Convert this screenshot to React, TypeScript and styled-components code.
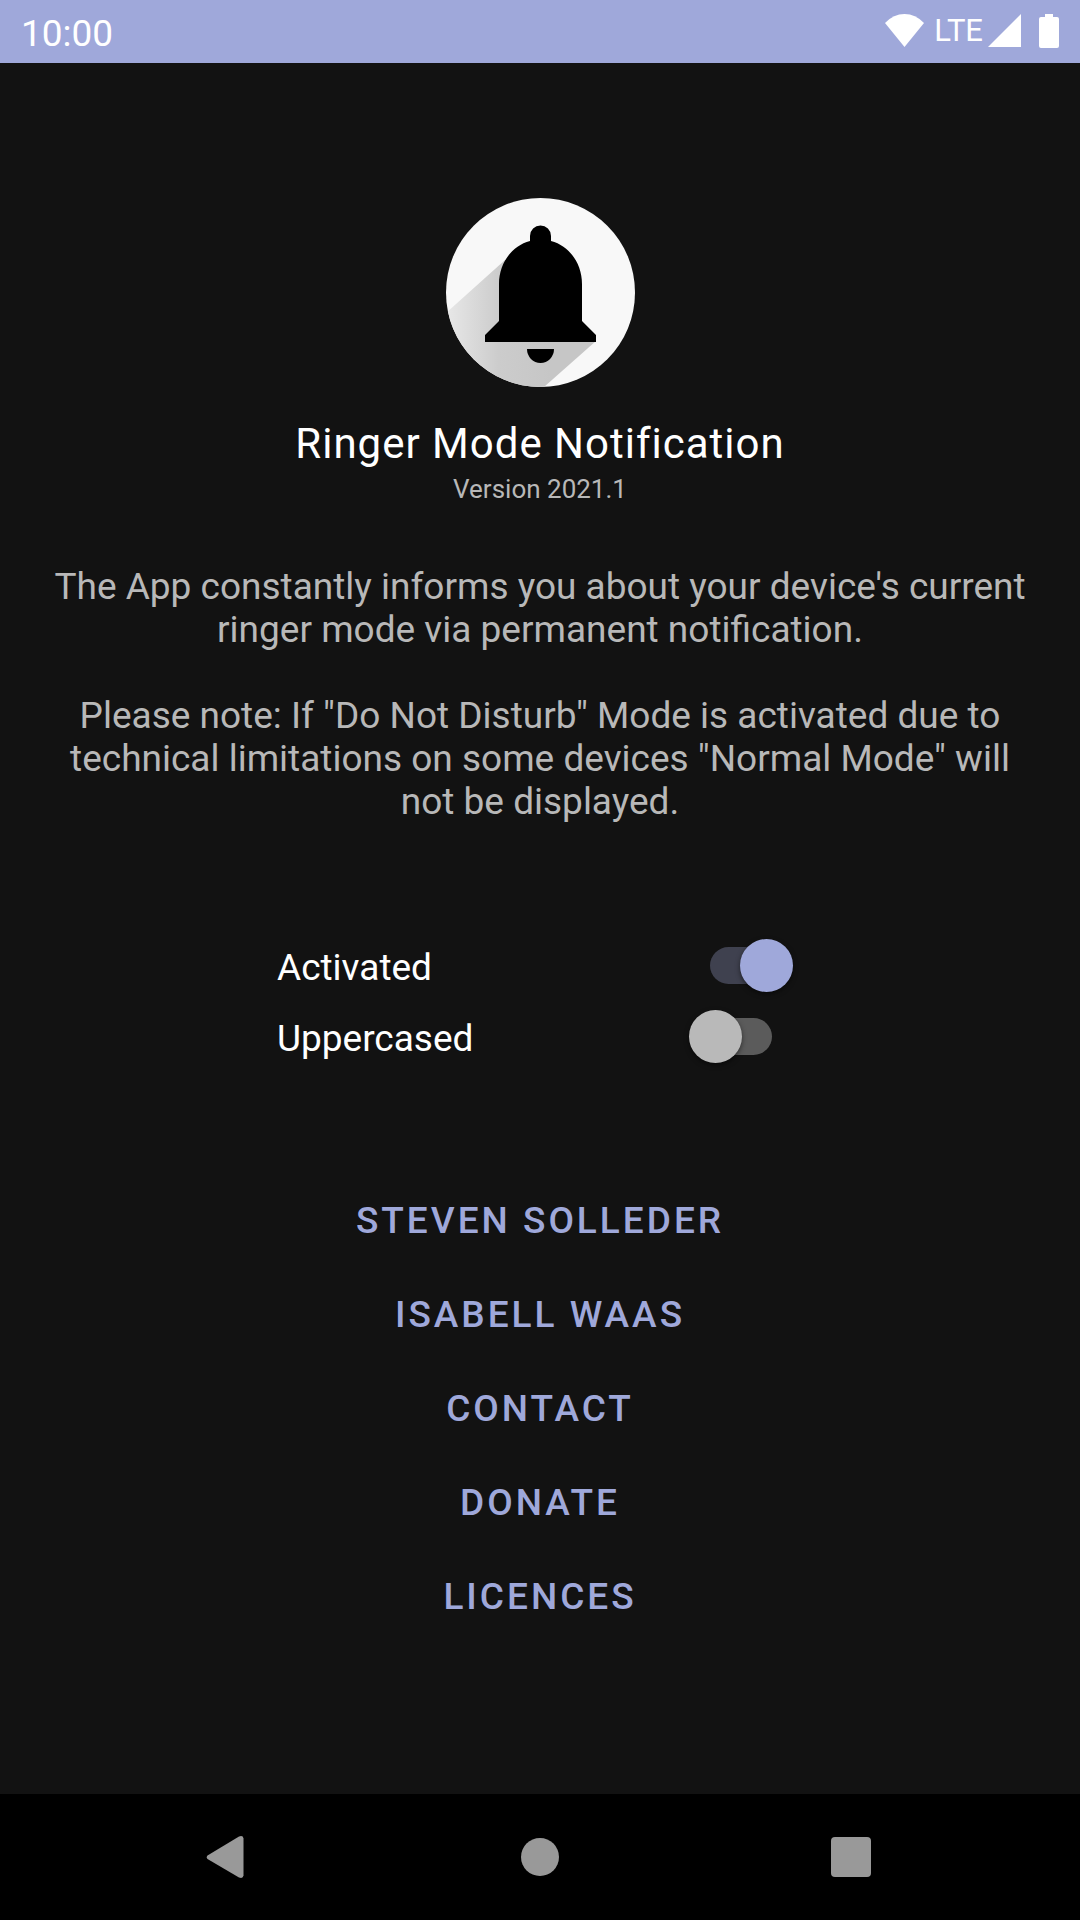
import React, { useState } from "react";
import styled, { createGlobalStyle } from "styled-components";

const GlobalStyle = createGlobalStyle`
  *, *::before, *::after { box-sizing: border-box; }
  body {
    margin: 0;
    background: #121212;
    color: #ffffff;
    font-family: Roboto, "Noto Sans", sans-serif;
  }
`;

const Screen = styled.div`
  display: flex;
  flex-direction: column;
  min-height: 100vh;
`;

const StatusBar = styled.header`
  display: flex;
  align-items: flex-start;
  justify-content: space-between;
  height: 63px;
  padding: 0 21px;
  background: #9fa8da;
`;

const Clock = styled.time`
  padding-top: 12px;
  font-size: 37px;
  line-height: 44px;
`;

const StatusIcons = styled.div`
  display: flex;
  align-items: center;
  height: 61px;
`;

const Network = styled.span`
  margin: 0 5px 0 10px;
  font-size: 31px;
  line-height: 40px;
`;

const BatteryIcon = styled.svg`
  margin-left: 18px;
`;

const Main = styled.main`
  flex: 1;
  display: flex;
  flex-direction: column;
  align-items: center;
  padding: 135px 42px 48px;
  text-align: center;
`;

const Title = styled.h1`
  margin: 32px 0 0;
  font-size: 42px;
  line-height: 50px;
  font-weight: 400;
  letter-spacing: 1px;
`;

const Version = styled.p`
  margin: 4px 0 0;
  color: #b8b8b8;
  font-size: 26px;
  line-height: 32px;
`;

const Description = styled.p`
  margin: 60px 0 0;
  color: #b8b8b8;
  font-size: 37px;
  line-height: 43px;

  & + & {
    margin-top: 43px;
  }
`;

const Settings = styled.div`
  width: 526px;
  max-width: 100%;
  margin-top: 109px;
`;

const SettingRow = styled.label`
  display: flex;
  align-items: center;
  justify-content: space-between;
  height: 71px;
  padding-right: 10px;
  font-size: 37px;
  line-height: 44px;
`;

const Switch = styled.input`
  appearance: none;
  display: grid;
  align-items: center;
  width: 104px;
  height: 53px;
  margin: 0 0 4px;

  &::before,
  &::after {
    content: "";
    grid-area: 1 / 1;
  }

  &::before {
    justify-self: center;
    width: 62px;
    height: 37px;
    border-radius: 19px;
    background: #5b5b5b;
  }

  &::after {
    justify-self: start;
    width: 53px;
    height: 53px;
    border-radius: 50%;
    background: #b9b9b9;
    box-shadow: 0 2px 5px rgba(0, 0, 0, 0.5);
  }

  &:checked::before {
    background: #3f414f;
  }

  &:checked::after {
    justify-self: end;
    background: #9fa8da;
  }
`;

const Links = styled.nav`
  display: flex;
  flex-direction: column;
  align-items: center;
  margin-top: 100px;
`;

const TextButton = styled.button`
  height: 94px;
  padding: 0 21px;
  border: 0;
  background: none;
  color: #9fa8da;
  font: 500 37px/44px Roboto, "Noto Sans", sans-serif;
  letter-spacing: 3px;
  text-transform: uppercase;
`;

const NavigationBar = styled.footer`
  display: flex;
  justify-content: center;
  height: 126px;
  background: #000000;
`;

const NavButton = styled.button`
  display: flex;
  align-items: center;
  justify-content: center;
  width: 311px;
  padding: 0;
  border: 0;
  background: none;
  color: #999999;
`;

function AppLogo() {
  return (
    <svg width="189" height="189" viewBox="0 0 189 189" role="img" aria-label="Bell">
      <defs>
        <linearGradient id="shade" gradientUnits="userSpaceOnUse" x1="0" y1="0" x2="105" y2="0">
          <stop offset="0" stopColor="#e8e8e8" />
          <stop offset="0.5" stopColor="#cccccc" />
          <stop offset="1" stopColor="#c6c6c6" />
        </linearGradient>
        <clipPath id="disc">
          <circle cx="94.5" cy="94.5" r="94.5" />
        </clipPath>
      </defs>
      <circle cx="94.5" cy="94.5" r="94.5" fill="#f8f8f8" />
      <path
        d="M59 62 L0 115 V189 H98 L150 143 L100 80 Z"
        fill="url(#shade)"
        clipPath="url(#disc)"
      />
      <path d="M84 43 V38 A10.5 10.5 0 0 1 105 38 V43 C124 48 136 66 136 86 V123 L150 137 V144 H39 V137 L53 123 V86 C53 66 65 48 84 43 Z" />
      <path d="M81 151 H108 A13.5 14 0 0 1 81 151 Z" />
    </svg>
  );
}

const links = ["Steven Solleder", "Isabell Waas", "Contact", "Donate", "Licences"];

export default function App() {
  const [activated, setActivated] = useState(true);
  const [uppercased, setUppercased] = useState(false);

  return (
    <Screen>
      <GlobalStyle />
      <StatusBar>
        <Clock>10:00</Clock>
        <StatusIcons>
          <svg width="39" height="33" viewBox="0 0 39 33" fill="#fff" aria-hidden="true">
            <path d="M0 9 Q8.500 0 19.500 0 T39 9 L19.500 33 Z" />
          </svg>
          <Network>LTE</Network>
          <svg width="33" height="33" viewBox="0 0 33 33" fill="#fff" aria-hidden="true">
            <path d="M33 0 V33 H0 Z" />
          </svg>
          <BatteryIcon width="20" height="34" viewBox="0 0 20 34" fill="#fff" aria-hidden="true">
            <path d="M6 0 H14 V3 H18 Q20 3 20 5 V32 Q20 34 18 34 H2 Q0 34 0 32 V5 Q0 3 2 3 H6 Z" />
          </BatteryIcon>
        </StatusIcons>
      </StatusBar>

      <Main>
        <AppLogo />
        <Title>Ringer Mode Notification</Title>
        <Version>Version 2021.1</Version>
        <Description>
          The App constantly informs you about your device's current ringer mode via permanent
          notification.
        </Description>
        <Description>
          Please note: If "Do Not Disturb" Mode is activated due to technical limitations on some
          devices "Normal Mode" will not be displayed.
        </Description>

        <Settings>
          <SettingRow>
            Activated
            <Switch
              type="checkbox"
              role="switch"
              checked={activated}
              onChange={(e) => setActivated(e.target.checked)}
            />
          </SettingRow>
          <SettingRow>
            Uppercased
            <Switch
              type="checkbox"
              role="switch"
              checked={uppercased}
              onChange={(e) => setUppercased(e.target.checked)}
            />
          </SettingRow>
        </Settings>

        <Links>
          {links.map((name) => (
            <TextButton key={name} type="button">
              {name}
            </TextButton>
          ))}
        </Links>
      </Main>

      <NavigationBar>
        <NavButton type="button" aria-label="Back">
          <svg width="46" height="42" viewBox="0 0 46 42" fill="currentColor" aria-hidden="true">
            <path d="M1.500 19.500 Q0 21 1.500 23 L33 41.500 Q37 43 37.500 39.500 V2.500 Q37 -1 33 0.500 Z" />
          </svg>
        </NavButton>
        <NavButton type="button" aria-label="Home">
          <svg width="38" height="38" viewBox="0 0 38 38" fill="currentColor" aria-hidden="true">
            <circle cx="19" cy="19" r="19" />
          </svg>
        </NavButton>
        <NavButton type="button" aria-label="Recent apps">
          <svg width="40" height="40" viewBox="0 0 40 40" fill="currentColor" aria-hidden="true">
            <rect width="40" height="40" rx="4" />
          </svg>
        </NavButton>
      </NavigationBar>
    </Screen>
  );
}
